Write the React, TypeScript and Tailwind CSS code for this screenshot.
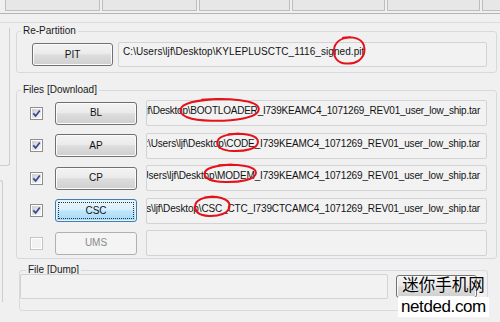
import React from "react";

const tabWidths = ["w-[95px]", "w-[95px]", "w-[91px]", "w-[93px]", "w-[93px]", "w-[20px]"];

const btnNormal =
  "border-[#707070] bg-[linear-gradient(#f3f3f3,#ebebeb_45%,#dddddd_52%,#cfcfcf)] shadow-[inset_0_0_0_1px_#fbfbfb] text-[#111]";
const btnFocus =
  "relative border-[#3c7fb1] bg-[linear-gradient(#eaf6fd,#d9f0fc_45%,#bee6fd_52%,#a7d9f5)] shadow-[inset_0_0_0_1px_#e4f4fc] text-[#111]";
const btnDisabled = "border-[#adb2b5] bg-[#f4f4f4] text-[#8a8a8a]";

function WinButton({ label, kind = "normal", w = "w-[82px]" }: { label: string; kind?: "normal" | "focus" | "disabled"; w?: string }) {
  const look = kind === "focus" ? btnFocus : kind === "disabled" ? btnDisabled : btnNormal;
  return (
    <div className={`${w} h-[23px] shrink-0 flex items-center justify-center rounded-[3px] border leading-none ${look}`}>
      {kind === "focus" && <span className="absolute inset-[2px] border border-dotted border-[#333]" />}
      <span className="relative">{label}</span>
    </div>
  );
}

function CheckBox({ on }: { on: boolean }) {
  return (
    <div className={`w-[13px] h-[13px] shrink-0 border p-[1px] bg-white ${on ? "border-[#8e8f8f]" : "border-[#c4c4c4]"}`}>
      <div className={`w-full h-full flex items-center justify-center ${on ? "bg-[linear-gradient(135deg,#cbcdd0,#f7f7f7)]" : "bg-[#f2f2f2]"}`}>
        {on && (
          <svg width="9" height="9" viewBox="0 0 9 9">
            <path d="M1.3 4.4 L3.6 6.9 L7.8 1.4" fill="none" stroke="#34488f" strokeWidth="1.7" />
          </svg>
        )}
      </div>
    </div>
  );
}

// hand drawn red ring around a piece of text
function Circled({ children, pos }: { children: React.ReactNode; pos: string }) {
  return (
    <span className="relative">
      {children}
      <span className={`absolute block pointer-events-none ${pos}`}>
        <svg className="block w-full h-full overflow-visible" viewBox="0 0 100 100" preserveAspectRatio="none">
          <path
            d="M28 7 C60 -1 97 8 97 46 C97 84 66 97 40 95 C13 93 2 73 3 49 C4 22 24 6 54 4"
            fill="none"
            stroke="#e3121b"
            strokeWidth="2"
            vectorEffect="non-scaling-stroke"
          />
        </svg>
      </span>
    </span>
  );
}

function GroupBox({ title, className, legendCls = "ml-[4px]", children }: { title: string; className: string; legendCls?: string; children: React.ReactNode }) {
  return (
    <fieldset className={`m-0 p-0 min-w-0 border border-[#d6dadf] rounded-[3px] ${className}`}>
      <legend className={`${legendCls} px-[2px] leading-[12px] text-[#1a1a1a]`}>{title}</legend>
      {children}
    </fieldset>
  );
}

export default function App() {
  const rows: { label: string; on: boolean; kind?: "normal" | "focus" | "disabled"; track: string; path: React.ReactNode }[] = [
    {
      label: "BL",
      on: true,
      track: "tracking-[-0.22px]",
      path: (
        <>
          C:\Users\ljf\Desktop\<Circled pos="-left-[12px] -right-[4px] -top-[7px] -bottom-[6px]">BOOTLOADER</Circled>_I739KEAMC4_1071269_REV01_user_low_ship.tar
        </>
      ),
    },
    {
      label: "AP",
      on: true,
      track: "tracking-[-0.15px]",
      path: (
        <>
          C:\Users\ljf\Desktop\<Circled pos="-left-[10px] -right-[5px] -top-[5px] -bottom-[3px]">CODE</Circled>_I739KEAMC4_1071269_REV01_user_low_ship.tar
        </>
      ),
    },
    {
      label: "CP",
      on: true,
      track: "tracking-[-0.15px]",
      path: (
        <>
          C:\Users\ljf\Desktop\<Circled pos="-left-[14px] -right-[3px] -top-[6px] -bottom-[2px]">MODEM</Circled>_I739KEAMC4_1071269_REV01_user_low_ship.tar
        </>
      ),
    },
    {
      label: "CSC",
      on: true,
      kind: "focus",
      track: "tracking-[-0.15px]",
      path: (
        <>
          C:\Users\ljf\Desktop\<Circled pos="-left-[7px] -right-[9px] -top-[7px] -bottom-[3px]">CSC</Circled>_CTC_I739CTCAMC4_1071269_REV01_user_low_ship.tar
        </>
      ),
    },
    { label: "UMS", on: false, kind: "disabled", track: "tracking-[-0.15px]", path: null },
  ];

  return (
    <div className="relative w-[500px] h-[322px] overflow-hidden bg-[#f0f0f0] font-['Liberation_Sans',Arial,sans-serif] text-[10px] text-[#121212]">
      {/* tab strip */}
      <div className="flex h-[11px] gap-[2px] pl-[5px]">
        {tabWidths.map((w, i) => (
          <div key={i} className={`${w} h-full shrink-0 border border-t-0 border-[#bdbdbd] bg-[#e7e7e7]`} />
        ))}
      </div>
      <div className="mt-[2px] border-t border-[#b4b4b4]" />
      <div className="mt-[8px] border-t border-[#dcdcdc]" />

      <div className="flex">
        {/* left panels edge */}
        <div className="w-[16px] shrink-0 flex flex-col">
          <div className="mt-[5px] h-[138px] w-[10px] border-r border-b border-[#cdcdcd] rounded-br-[3px]" />
          <div className="mt-[14px] h-[122px] w-[3px] border-t border-r border-[#cdcdcd] rounded-tr-[3px]" />
        </div>

        <div className="w-[481px] flex flex-col">
          <GroupBox title="Re-Partition" className="mt-[2px] h-[48px]">
            <div className="pt-[5px] pl-[15px] flex items-center h-[30px]">
              <WinButton label="PIT" w="w-[81px]" />
              <div className="ml-[5px] w-[369px] h-[25px] border border-[#d3d3d3] rounded-[2px] bg-[#f2f2f2] pl-[4px] pt-[3px] leading-[12px] whitespace-nowrap tracking-[0.07px]">
                C:\Users\ljf\Desktop\KYLEPLUSCTC_1116_sig
                <Circled pos="-left-[1px] -right-[1px] -top-[10px] -bottom-[8px]">ned.pit</Circled>
              </div>
            </div>
          </GroupBox>

          <GroupBox title="Files [Download]" className="mt-[11px] h-[175px]">
            <div className="pt-[4px] pl-[13px] flex flex-col gap-[6.5px]">
              {rows.map((r) => (
                <div key={r.label} className="flex items-center h-[26px]">
                  <CheckBox on={r.on} />
                  <div className="ml-[12px]">
                    <WinButton label={r.label} kind={r.kind} />
                  </div>
                  <div className={`ml-[9px] w-[341px] h-[26px] shrink-0 border border-[#d3d3d3] rounded-[2px] bg-[#f2f2f2] flex justify-end items-start overflow-x-clip pr-[6px] pt-[4px] leading-[12px] whitespace-nowrap ${r.track}`}>
                    {r.path && <span className="shrink-0">{r.path}</span>}
                  </div>
                </div>
              ))}
            </div>
          </GroupBox>

          <GroupBox title="File [Dump]" className="mt-[5px] ml-[3px] w-[469px] h-[47px]" legendCls="ml-[6px]">
            <div className="-mt-[2px] flex items-center">
              <div className="w-[368px] h-[25px] border border-[#d3d3d3] rounded-[2px] bg-[#f2f2f2]" />
              <div className="ml-[8px]">
                <WinButton label="" w="w-[81px]" />
              </div>
            </div>
          </GroupBox>
        </div>
      </div>

      {/* watermark */}
      <div className="absolute left-[398px] top-[274px] flex flex-col items-center">
        <div className="font-['Noto_Sans_CJK_SC',sans-serif] text-[16.5px] leading-[20px] text-black [text-shadow:0_0_2px_#fff]">
          迷你手机网
        </div>
        <div className="mt-[3px] bg-white px-[3px] font-['Liberation_Sans',Arial,sans-serif] text-[17px] leading-[20px] tracking-[-0.4px] text-black">
          netded.com
        </div>
      </div>
    </div>
  );
}
